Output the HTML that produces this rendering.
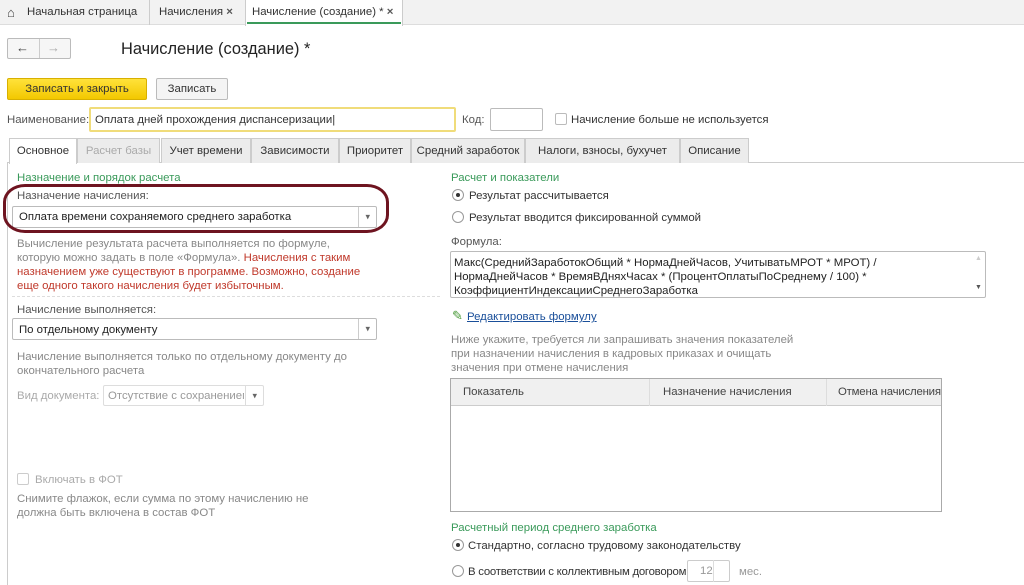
<!DOCTYPE html>
<html><head><meta charset="utf-8"><style>
*{box-sizing:border-box;margin:0;padding:0}
body{width:1024px;height:585px;background:#fff;font-family:"Liberation Sans",Arial,sans-serif;font-size:11.4px;color:#333;position:relative;overflow:hidden}
.a{position:absolute;white-space:nowrap}
.g{color:#888}
.gr{color:#3a9a5a}
.red{color:#c0392b}
.inp{position:absolute;border:1px solid #bbb;background:#fff;border-radius:2px}
.tab{position:absolute;top:138px;height:25px;background:#ececec;border:1px solid #ccc;border-bottom:none;line-height:25px;text-align:center;color:#333}
.sel:after{content:"▾";position:absolute;right:6px;top:50%;transform:translateY(-50%);font-size:9px;color:#666}
.dd{position:absolute;top:0;bottom:0;width:18px;right:0;border-left:1px solid #ccc}
.rad{position:absolute;width:12px;height:12px;border:1px solid #999;border-radius:50%;background:#fff}
.rad.on:after{content:"";position:absolute;left:3px;top:3px;width:4px;height:4px;border-radius:50%;background:#333}
.cb{position:absolute;width:12px;height:12px;border:1px solid #bbb;background:#fff;border-radius:2px}
</style></head><body>
<div class="a" style="left:0;top:0;width:1024px;height:25px;background:#f2f2f2;border-bottom:1px solid #ddd"></div>
<div class="a" style="left:7px;top:5px;font-size:13px;color:#444">⌂</div>
<div class="a" style="left:27px;top:6px">Начальная страница</div>
<div class="a" style="left:149px;top:0;width:1px;height:25px;background:#ccc"></div>
<div class="a" style="left:159px;top:6px">Начисления <b style="color:#555">×</b></div>
<div class="a" style="left:245px;top:0;width:158px;height:26px;background:#fff;border-left:1px solid #ccc;border-right:1px solid #ccc"></div>
<div class="a" style="left:252px;top:6px">Начисление (создание) * <b style="color:#555">×</b></div>
<div class="a" style="left:247px;top:22px;width:154px;height:2px;background:#3a9a5a"></div>

<div class="a" style="left:7px;top:38px;width:64px;height:21px;border:1px solid #bbb;border-radius:2px;background:#f6f6f6"></div>
<div class="a" style="left:39px;top:39px;width:1px;height:19px;background:#ccc"></div>
<div class="a" style="left:16px;top:40px;font-size:13px;font-weight:bold;color:#444">←</div>
<div class="a" style="left:47px;top:40px;font-size:13px;color:#aaa">→</div>
<div class="a" style="left:121px;top:40px;font-size:16.4px;color:#222">Начисление (создание) *</div>

<div class="a" style="left:7px;top:78px;width:140px;height:22px;background:linear-gradient(#ffe23a,#f3c800);border:1px solid #d8b000;border-radius:2px;text-align:center;line-height:20px;color:#333">Записать и закрыть</div>
<div class="a" style="left:156px;top:78px;width:72px;height:22px;background:#f4f4f4;border:1px solid #bbb;border-radius:2px;text-align:center;line-height:20px">Записать</div>

<div class="a" style="left:7px;top:114px;color:#555">Наименование:</div>
<div class="inp" style="left:89px;top:107px;width:367px;height:25px;border:2px solid #f0dc7a"></div>
<div class="a" style="left:95px;top:114px">Оплата дней прохождения диспансеризации|</div>
<div class="a" style="left:462px;top:114px;color:#555">Код:</div>
<div class="inp" style="left:490px;top:108px;width:53px;height:23px"></div>
<div class="cb" style="left:555px;top:113px"></div>
<div class="a" style="left:571px;top:114px">Начисление больше не используется</div>

<div class="a" style="left:7px;top:162px;width:1017px;height:1px;background:#ccc"></div>
<div class="a" style="left:7px;top:162px;width:1px;height:423px;background:#ccc"></div>
<div class="tab" style="left:9px;width:68px;background:#fff;height:26px">Основное</div>
<div class="tab" style="left:77px;width:83px;color:#aaa">Расчет базы</div>
<div class="tab" style="left:161px;width:90px">Учет времени</div>
<div class="tab" style="left:251px;width:88px">Зависимости</div>
<div class="tab" style="left:339px;width:72px">Приоритет</div>
<div class="tab" style="left:411px;width:114px">Средний заработок</div>
<div class="tab" style="left:525px;width:155px">Налоги, взносы, бухучет</div>
<div class="tab" style="left:680px;width:69px">Описание</div>

<div class="a gr" style="left:17px;top:172px">Назначение и порядок расчета</div>
<div class="a" style="left:17px;top:190px;color:#555">Назначение начисления:</div>
<div class="inp sel" style="left:12px;top:206px;width:365px;height:22px"><div class="dd"></div></div>
<div class="a" style="left:19px;top:211px;color:#222">Оплата времени сохраняемого среднего заработка</div>
<div class="a" style="left:3px;top:184px;width:386px;height:49px;border:3px solid #6e1420;border-radius:22px/18px"></div>
<div class="a g" style="left:17px;top:237px;line-height:14px">Вычисление результата расчета выполняется по формуле,<br>которую можно задать в поле «Формула». <span class="red">Начисления с таким</span><br><span class="red">назначением уже существуют в программе. Возможно, создание<br>еще одного такого начисления будет избыточным.</span></div>
<div class="a" style="left:12px;top:296px;width:428px;border-top:1px dashed #ddd"></div>
<div class="a" style="left:17px;top:304px;color:#555">Начисление выполняется:</div>
<div class="inp sel" style="left:12px;top:318px;width:365px;height:22px"><div class="dd"></div></div>
<div class="a" style="left:19px;top:324px;color:#222">По отдельному документу</div>
<div class="a g" style="left:17px;top:350px;line-height:14px">Начисление выполняется только по отдельному документу до<br>окончательного расчета</div>
<div class="a" style="left:17px;top:390px;color:#aaa">Вид документа:</div>
<div class="inp sel" style="left:103px;top:385px;width:161px;height:21px;border-color:#ddd"><div class="dd" style="border-color:#ddd"></div></div>
<div class="a" style="left:108px;top:390px;color:#999;width:136px;overflow:hidden">Отсутствие с сохранением</div>
<div class="cb" style="left:17px;top:473px;border-color:#ccc"></div>
<div class="a" style="left:35px;top:474px;color:#aaa">Включать в ФОТ</div>
<div class="a g" style="left:17px;top:492px;line-height:14px">Снимите флажок, если сумма по этому начислению не<br>должна быть включена в состав ФОТ</div>

<div class="a gr" style="left:451px;top:172px">Расчет и показатели</div>
<div class="rad on" style="left:452px;top:189px"></div>
<div class="a" style="left:469px;top:190px">Результат рассчитывается</div>
<div class="rad" style="left:452px;top:211px"></div>
<div class="a" style="left:469px;top:212px">Результат вводится фиксированной суммой</div>
<div class="a" style="left:451px;top:236px;color:#555">Формула:</div>
<div class="inp" style="left:450px;top:251px;width:536px;height:47px"></div>
<div class="a" style="left:454px;top:256px;line-height:14px;color:#222">Макс(СреднийЗаработокОбщий * НормаДнейЧасов, УчитыватьМРОТ * МРОТ) /<br>НормаДнейЧасов * ВремяВДняхЧасах * (ПроцентОплатыПоСреднему / 100) *<br>КоэффициентИндексацииСреднегоЗаработка</div>
<div class="a" style="left:975px;top:255px;font-size:7px;color:#ccc">▲</div>
<div class="a" style="left:975px;top:284px;font-size:7px;color:#555">▼</div>
<div class="a" style="left:452px;top:308px;color:#4a9a3a;font-size:13px">✎</div>
<div class="a" style="left:467px;top:311px;color:#1a4f9a;text-decoration:underline">Редактировать формулу</div>
<div class="a g" style="left:451px;top:333px;line-height:14px">Ниже укажите, требуется ли запрашивать значения показателей<br>при назначении начисления в кадровых приказах и очищать<br>значения при отмене начисления</div>
<div class="a" style="left:450px;top:378px;width:492px;height:134px;border:1px solid #aaa"></div>
<div class="a" style="left:451px;top:379px;width:490px;height:27px;background:#f0f0f0;border-bottom:1px solid #ccc"></div>
<div class="a" style="left:649px;top:379px;width:1px;height:27px;background:#ddd"></div>
<div class="a" style="left:826px;top:379px;width:1px;height:27px;background:#ddd"></div>
<div class="a" style="left:463px;top:386px;color:#444">Показатель</div>
<div class="a" style="left:663px;top:386px;color:#444">Назначение начисления</div>
<div class="a" style="left:838px;top:386px;color:#444;letter-spacing:-0.2px">Отмена начисления</div>
<div class="a gr" style="left:451px;top:522px">Расчетный период среднего заработка</div>
<div class="rad on" style="left:452px;top:539px"></div>
<div class="a" style="left:468px;top:540px">Стандартно, согласно трудовому законодательству</div>
<div class="rad" style="left:452px;top:565px"></div>
<div class="a" style="left:468px;top:566px;letter-spacing:-0.25px">В соответствии с коллективным договором</div>
<div class="inp" style="left:687px;top:560px;width:43px;height:22px;border-color:#ccc"></div>
<div class="a" style="left:713px;top:560px;width:1px;height:22px;background:#ddd"></div>
<div class="a" style="left:700px;top:565px;color:#999">12</div>
<div class="a" style="left:739px;top:566px;color:#999">мес.</div>
</body></html>
